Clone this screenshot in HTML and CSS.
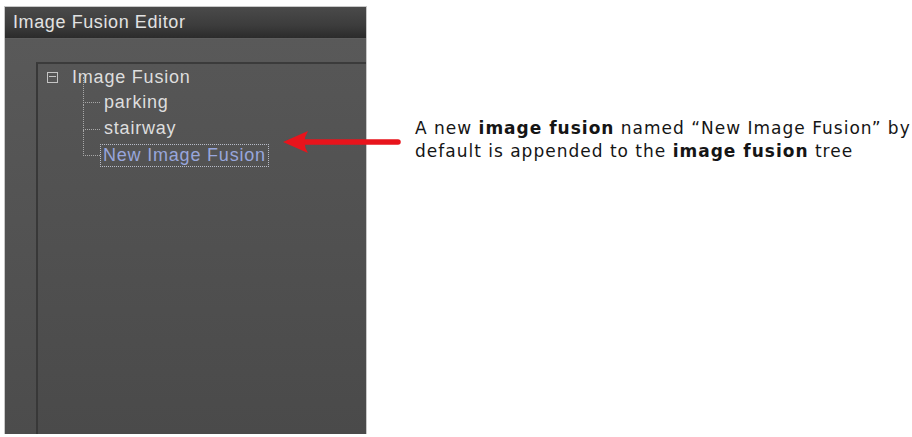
FILE: index.html
```html
<!DOCTYPE html>
<html lang="en">
<head>
    <meta charset="UTF-8">
    <title>Image Fusion Editor</title>
    <link rel="stylesheet" href="styles.css">
</head>
<body>
    <div class="page">
        <div class="editor">
            <div class="title-bar">Image Fusion Editor</div>
            <div class="editor-body">
                <div class="tree">
                    <div class="tree-root">
                        <span class="toggle"></span>
                        <span class="label">Image Fusion</span>
                    </div>
                    <ul class="tree-children">
                        <li><span class="label">parking</span></li>
                        <li><span class="label">stairway</span></li>
                        <li class="selected"><span class="label">New Image Fusion</span></li>
                    </ul>
                </div>
            </div>
            <svg class="arrow" width="120" height="24" viewBox="0 0 120 24">
                <path d="M18 12H115" stroke="#e8141c" stroke-width="5.5" stroke-linecap="round"/>
                <path d="M0 12L25 1Q18 12 25 23Z" fill="#e8141c"/>
            </svg>
        </div>
        <p class="note">
            A new <b>image fusion</b> named “New Image Fusion” by<br>
            default is appended to the <b>image fusion</b> tree
        </p>
    </div>
</body>
</html>
```

FILE: styles.css
```css
body, html {
    margin: 0;
    padding: 0;
    background-color: white;
}
.page {
    display: flex;
    align-items: flex-start;
    padding: 7px 0 0 5px;
}
.editor {
    position: relative;
    width: 361px;
    height: 427px;
    display: flex;
    flex-direction: column;
    background: linear-gradient(#5a5a5a, #4c4c4c);
    box-shadow: 0 0 0 1px #c8c8c8;
    font-family: "Liberation Sans", Arial, sans-serif;
}
.title-bar {
    height: 31px;
    line-height: 30px;
    padding-left: 8px;
    font-size: 18px;
    letter-spacing: 0.6px;
    color: #e2e2e2;
    background: linear-gradient(#4a4a4a, #3c3c3c 60%, #2b2b2b);
}
.editor-body {
    flex: 1;
    display: flex;
    padding: 23px 0 0 31px;
    border-top: 1px solid #5e5e5e;
}
.tree {
    flex: 1;
    border-top: 2px solid #3b3b3b;
    border-left: 2px solid #383838;
    background: linear-gradient(#565656, #4a4a4a);
    padding-top: 1px;
    color: #dedede;
    font-size: 18px;
    letter-spacing: 0.8px;
}
.tree-root {
    display: flex;
    align-items: center;
    height: 24px;
    padding-left: 9px;
}
.toggle {
    position: relative;
    width: 9px;
    height: 9px;
    border: 1.5px solid #c4c4c4;
    margin-right: 14px;
}
.toggle::after {
    content: "";
    position: absolute;
    left: 1px;
    right: 1px;
    top: 3.5px;
    border-top: 1.5px solid #c4c4c4;
}
.tree-children {
    list-style: none;
    margin: 0;
    padding: 0 0 0 45px;
}
.tree-children li {
    position: relative;
    display: flex;
    align-items: center;
    height: 26.5px;
    padding-left: 21px;
}
.tree-children li::before {
    content: "";
    position: absolute;
    left: 0;
    top: 13px;
    width: 17px;
    border-top: 1px dotted #a8a8a8;
}
.tree-children li::after {
    content: "";
    position: absolute;
    left: 0;
    top: -12px;
    height: 26px;
    border-left: 1px dotted #a8a8a8;
}
.tree-children li.selected {
    padding-left: 17px;
}
.selected .label {
    color: #98a6dc;
    border: 1px dotted #b8bcc8;
    padding: 0 2px;
    line-height: 21px;
}
.arrow {
    position: absolute;
    left: 278px;
    top: 123px;
}
.note {
    margin: 110px 0 0 49px;
    font-family: "DejaVu Sans", sans-serif;
    font-size: 17px;
    letter-spacing: 1px;
    line-height: 23px;
    color: #151515;
}
.note b {
    font-weight: bold;
}
```
